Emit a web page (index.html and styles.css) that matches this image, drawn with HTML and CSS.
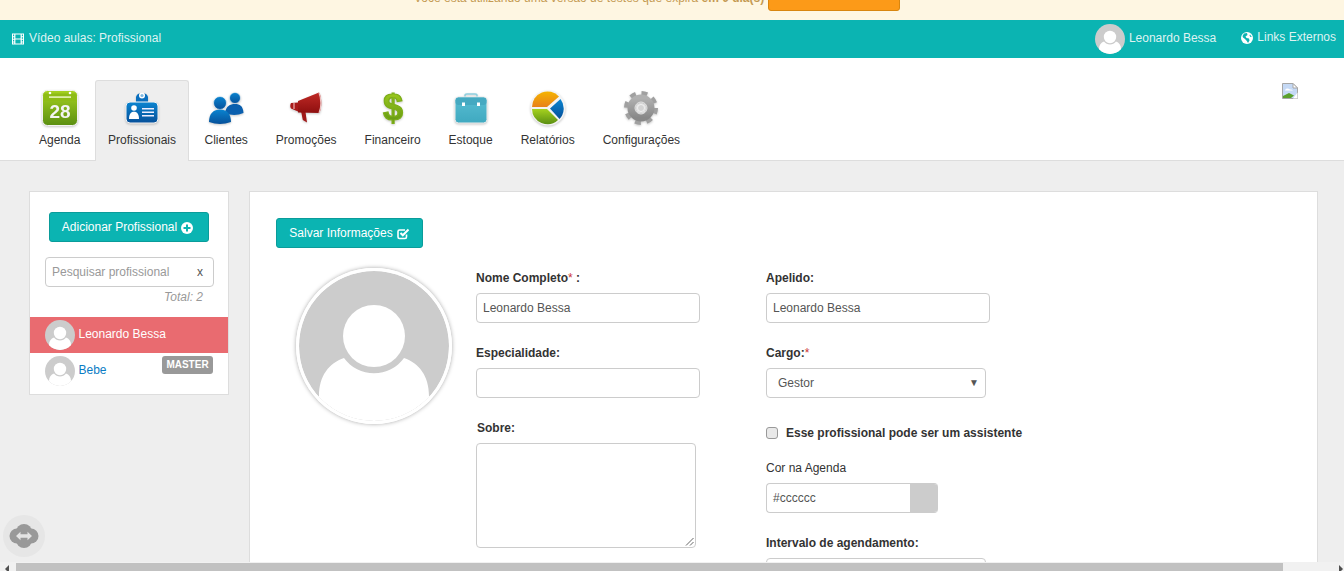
FILE: index.html
```html
<!DOCTYPE html>
<html lang="pt-BR">
<head>
<meta charset="utf-8">
<title>Profissional</title>
<link rel="stylesheet" href="styles.css">
</head>
<body>
<svg class="sprite" aria-hidden="true">
  <defs>
    <clipPath id="avclip"><circle cx="75" cy="75" r="75"/></clipPath>
    <linearGradient id="gGreen" x1="0" y1="0" x2="0" y2="1"><stop offset="0" stop-color="#a6d21f"/><stop offset="1" stop-color="#5b8f12"/></linearGradient>
    <linearGradient id="gBlue" x1="0" y1="0" x2="0" y2="1"><stop offset="0" stop-color="#0a84d0"/><stop offset="1" stop-color="#06509a"/></linearGradient>
    <linearGradient id="gRed" x1="0" y1="0" x2="0" y2="1"><stop offset="0" stop-color="#c02a26"/><stop offset="1" stop-color="#8e0f0f"/></linearGradient>
    <linearGradient id="gTeal" x1="0" y1="0" x2="0" y2="1"><stop offset="0" stop-color="#58bdd2"/><stop offset="1" stop-color="#3fa9c0"/></linearGradient>
    <linearGradient id="gOrange" x1="0" y1="0" x2="0" y2="1"><stop offset="0" stop-color="#f5b400"/><stop offset="1" stop-color="#e8801a"/></linearGradient>
    <linearGradient id="gGray" x1="0" y1="0" x2="0" y2="1"><stop offset="0" stop-color="#b0b0b0"/><stop offset="1" stop-color="#888"/></linearGradient>
    <symbol id="avatar" viewBox="0 0 150 150">
      <g clip-path="url(#avclip)">
        <rect width="150" height="150" fill="#ccc"/>
        <circle cx="75" cy="65" r="31" fill="#fff"/>
        <path d="M20 125C20 105 30 92 45 87A37 37 0 0 0 105 87C120 92 130 105 130 125V150H20Z" fill="#fff"/>
      </g>
    </symbol>
  </defs>
</svg>

<div class="banner">
  <span class="banner-text">Você está utilizando uma versão de testes que expira <b>em 0 dia(s)</b></span>
  <span class="banner-btn"></span>
</div>

<header class="topbar">
  <div class="topbar-left">
    <svg class="fa" width="12" height="12" viewBox="0 0 12 12"><path fill-rule="evenodd" fill="#fff" d="M0 .5H12V11.500H0ZM1 1.500V3.200H2.200V1.500ZM1 4.200V5.800H2.200V4.200ZM1 6.800V8.400H2.200V6.800ZM1 9.400V10.500H2.200V9.400ZM9.800 1.500V3.200H11V1.500ZM9.800 4.200V5.800H11V4.200ZM9.800 6.800V8.400H11V6.800ZM9.800 9.400V10.500H11V9.400ZM3.400 1.500V5.400H8.600V1.500ZM3.400 6.600V10.500H8.600V6.600Z"/></svg>
    <span>Vídeo aulas: Profissional</span>
  </div>
  <div class="topbar-right">
    <svg class="av30"><use href="#avatar"/></svg>
    <span class="topbar-name">Leonardo Bessa</span>
    <svg class="fa globe" width="12" height="12" viewBox="0 0 12 12"><circle cx="6" cy="6" r="6" fill="#fff"/><path fill="#0bb4b2" d="M3 1.500 6 1 6.500 3 4.500 4.500 5.500 6 8 6.500 8.500 8.500 7 11 5.800 9 4 7 2 5.500 1.500 4ZM9 2.500 10.800 5 9.500 5 8.500 3.500Z"/></svg>
    <span class="topbar-links">Links Externos</span>
  </div>
</header>

<nav class="nav">
  <a class="tab">
    <svg class="ico" viewBox="0 0 36 36"><rect x="0.500" y="0.500" width="35" height="35" rx="5" fill="url(#gGreen)" stroke="#f2f2f2"/><rect x="1.500" y="3.500" width="33" height="7.500" fill="#8ebc16"/><circle cx="8" cy="3" r="1.300" fill="#fff"/><circle cx="28" cy="3" r="1.300" fill="#fff"/><rect x="7" y="6.300" width="22" height="1.600" fill="#e6f2b8"/><text class="cal" x="18" y="27.500" text-anchor="middle">28</text></svg>
    <span>Agenda</span>
  </a>
  <a class="tab active">
    <svg class="ico" viewBox="0 0 36 36"><path d="M12 13V7A5 5 0 0 1 15 3.500H21A5 5 0 0 1 24 7V13Z" fill="#0a6fbe"/><circle cx="18" cy="5.500" r="3" fill="#fff"/><circle cx="18" cy="5.500" r="1.600" fill="#7db7e0"/><rect x="2" y="12" width="32" height="21" rx="4" fill="url(#gBlue)" stroke="#f5f5f5"/><circle cx="10" cy="18" r="2.800" fill="#fff"/><path d="M5 29C5 23.500 7.500 21.800 10 21.800S15 23.500 15 29Z" fill="#fff"/><path d="M18 18H30V19.500H18ZM18 21.500H30V23H18ZM18 25H30V26.500H18Z" fill="#eef"/></svg>
    <span>Profissionais</span>
  </a>
  <a class="tab">
    <svg class="ico" viewBox="0 0 36 36"><circle cx="27" cy="8" r="5.500" fill="url(#gBlue)" stroke="#fff" stroke-width=".6"/><path d="M17 23C18 16 22 14 27 14S35 16 35.500 23Q26 27 17 23Z" fill="#0a5fae"/><circle cx="12" cy="13" r="6.500" fill="url(#gBlue)" stroke="#fff" stroke-width=".6"/><path d="M1 32C1 23 6 19.500 12 19.500S23 23 23 32Q12 36 1 32Z" fill="url(#gBlue)"/></svg>
    <span>Clientes</span>
  </a>
  <a class="tab">
    <svg class="ico" viewBox="0 0 36 36"><path d="M13 21 17.500 22 19 32.500 14.800 30Z" fill="#a01818"/><path d="M3 13 10 12.500V21.500L3 18.500Q1.500 15.500 3 13Z" fill="#a81a1a"/><path d="M10 11 31 2.500C34 7 34 19 31 23L10 22.500Z" fill="url(#gRed)"/><path d="M31 3C33.500 8 33.500 18 31 23" fill="none" stroke="#f0c0c0" stroke-width="1.200"/><path d="M6 13V19" stroke="#e9b0b0" stroke-width="1.200"/></svg>
    <span>Promoções</span>
  </a>
  <a class="tab">
    <svg class="ico" viewBox="0 0 36 36"><text class="dollar" x="18" y="30" text-anchor="middle">$</text></svg>
    <span>Financeiro</span>
  </a>
  <a class="tab">
    <svg class="ico" viewBox="0 0 36 36"><path d="M12 8V5.500Q12 4 14 4H22Q24 4 24 5.500V8" fill="none" stroke="#8fd0df" stroke-width="1.500"/><rect x="2" y="7" width="32" height="26" rx="3.500" fill="url(#gTeal)" stroke="#ececec"/><rect x="2.500" y="7.500" width="31" height="7.500" rx="3" fill="#45a9c1"/><rect x="9" y="12.500" width="3" height="3.500" fill="#fff"/><rect x="24" y="12.500" width="3" height="3.500" fill="#fff"/></svg>
    <span>Estoque</span>
  </a>
  <a class="tab">
    <svg class="ico" viewBox="0 0 36 36"><circle cx="18" cy="18" r="17.500" fill="#f4f4f4"/><path d="M17 17H2A15.500 15.500 0 0 1 29 6.500Z" fill="url(#gOrange)"/><path d="M2 19H17L28 30A15.500 15.500 0 0 1 2 19Z" fill="url(#gGreen)"/><path d="M30.500 9A15.500 15.500 0 0 1 29.500 29L20 18.500Z" fill="url(#gBlue)"/></svg>
    <span>Relatórios</span>
  </a>
  <a class="tab">
    <svg class="ico" viewBox="0 0 36 36"><circle cx="18" cy="18" r="14.500" fill="none" stroke="#a0a0a0" stroke-width="5" stroke-dasharray="5.700 5.700"/><circle cx="18" cy="18" r="9.500" fill="none" stroke="url(#gGray)" stroke-width="8"/><circle cx="18" cy="18" r="6" fill="none" stroke="#e4e4e4" stroke-width="1"/><circle cx="18" cy="18" r="3.500" fill="#d4d4d4" stroke="#f0f0f0"/></svg>
    <span>Configurações</span>
  </a>
  <svg class="broken" width="16" height="16" viewBox="0 0 16 16"><path d="M.5.500H11L15.500 5V15.500H.5Z" fill="#c5d9f5" stroke="#a6a6a6"/><path d="M11 .5V5H15.500Z" fill="#fff" stroke="#a6a6a6"/><path d="M3 7Q5 4.500 8 6.500 10 6 11 7.500H3Z" fill="#fff"/><path d="M1 15V13L7 10 12 12.500 9 15Z" fill="#5aa02c"/><path d="M15.500 9.500 11 15.500H15.500Z" fill="#fff"/></svg>
</nav>

<main class="content">
  <aside class="side">
    <button class="btn btn-add">Adicionar Profissional
      <svg class="fa plus" width="12" height="12" viewBox="0 0 12 12"><circle cx="6" cy="6" r="6" fill="#fff"/><path d="M5 2.500H7V5H9.500V7H7V9.500H5V7H2.500V5H5Z" fill="#0bb4b2"/></svg>
    </button>
    <div class="search">
      <span class="search-ph">Pesquisar profissional</span>
      <span class="search-x">x</span>
    </div>
    <div class="total">Total: 2</div>
    <ul class="people">
      <li class="person selected"><svg class="av30"><use href="#avatar"/></svg><span>Leonardo Bessa</span></li>
      <li class="person"><svg class="av30"><use href="#avatar"/></svg><span class="person-link">Bebe</span><em class="badge">MASTER</em></li>
    </ul>
  </aside>

  <section class="panel">
    <button class="btn btn-save">Salvar Informações
      <svg class="fa plus" width="13" height="12" viewBox="0 0 13 12"><path d="M9.500 6.500V9Q9.500 10.500 8 10.500H2.500Q1 10.500 1 9V3.500Q1 2 2.500 2H8" fill="none" stroke="#fff" stroke-width="1.600"/><path d="M3.500 5 5.800 7.300 11.500 1.500" fill="none" stroke="#fff" stroke-width="2"/></svg>
    </button>
    <div class="form">
      <div class="photo"><svg class="photo-img"><use href="#avatar"/></svg></div>
      <div class="col col-a">
        <div class="field">
          <label class="lbl">Nome Completo<i>*</i> :</label>
          <div class="input">Leonardo Bessa</div>
        </div>
        <div class="field">
          <label class="lbl">Especialidade:</label>
          <div class="input"></div>
        </div>
        <div class="field">
          <label class="lbl lbl-sobre">Sobre:</label>
          <div class="textarea">
            <svg class="grip" width="9" height="9" viewBox="0 0 9 9"><path d="M8.500 1 1 8.500M8.500 5 5 8.500" stroke="#666" fill="none"/></svg>
          </div>
        </div>
      </div>
      <div class="col">
        <div class="field">
          <label class="lbl">Apelido:</label>
          <div class="input">Leonardo Bessa</div>
        </div>
        <div class="field">
          <label class="lbl">Cargo:<i>*</i></label>
          <div class="input select">Gestor<span class="arrow">▼</span></div>
        </div>
        <div class="check"><span class="box"></span><b>Esse profissional pode ser um assistente</b></div>
        <div class="field field-color">
          <label class="lbl lbl-plain">Cor na Agenda</label>
          <div class="color"><span class="color-val">#cccccc</span><span class="swatch"></span></div>
        </div>
        <div class="field">
          <label class="lbl">Intervalo de agendamento:</label>
          <div class="input select"></div>
        </div>
      </div>
    </div>
  </section>
</main>

<div class="cloud">
  <svg width="30" height="24" viewBox="0 0 30 24"><g fill="#999"><circle cx="8" cy="12" r="7.500"/><circle cx="22" cy="12" r="7.500"/><circle cx="15" cy="8" r="8"/><circle cx="15" cy="16" r="8"/></g><path d="M7 12 11.500 7.800V10.300H18.500V7.800L23 12 18.500 16.200V13.700H11.500V16.200Z" fill="#e4e4e4"/></svg>
</div>

<div class="hscroll">
  <span class="sc-arrow sc-left"></span>
  <span class="sc-thumb"></span>
  <span class="sc-arrow sc-right"></span>
</div>
</body>
</html>
```
FILE: styles.css
```css
* { box-sizing: border-box; }
html, body { margin: 0; height: 571px; overflow: hidden; }
body {
  font: 12px/16px "Liberation Sans", Arial, sans-serif;
  color: #333;
  background: #eee;
  position: relative;
}
.sprite { display: block; width: 0; height: 0; }
.fa { display: block; flex: none; }
.av30 { display: block; flex: none; width: 30px; height: 30px; }

/* trial banner, scrolled partly off the top */
.banner {
  height: 20px;
  background: #fef6e2;
  display: flex;
  gap: 4px;
  padding-left: 414px;
  overflow: hidden;
}
.banner-text {
  flex: none;
  width: 350px;
  line-height: 16px;
  margin-top: -10px;
  color: #c49a52;
  white-space: nowrap;
}
.banner-btn {
  flex: none;
  width: 132px;
  height: 30px;
  margin-top: -19px;
  background: #fc9a18;
  border: 1px solid #d8860f;
  border-radius: 3px;
}

/* top bar */
.topbar {
  height: 38px;
  background: #0bb4b2;
  color: #dff3f2;
  display: flex;
  justify-content: space-between;
  align-items: center;
  padding: 0 8px 0 12px;
}
.topbar-left, .topbar-right { display: flex; align-items: center; }
.topbar-left { gap: 5px; margin-top: -1px; }
.topbar-left span { margin-top: -1px; }
.topbar-name { margin: -2px 0 0 4px; }
.globe { margin: -2px 0 0 25px; }
.topbar-links { margin-left: 4px; margin-top: -4px; }

/* icon tabs */
.nav {
  height: 103px;
  background: #fff;
  border-bottom: 1px solid #ddd;
  display: flex;
  padding: 22px 46px 0 25px;
}
.tab {
  height: 81px;
  padding: 10px 14px 0;
  display: flex;
  flex-direction: column;
  align-items: center;
  border-top: 1px solid transparent;
  border-radius: 3px 3px 0 0;
}
.tab.active {
  background: #eee;
  border: 1px solid #ddd;
  border-bottom: 0;
  padding: 9px 12px 0;
  margin: 0 1.500px 0 .6px;
}
.tab span { margin-top: 6px; line-height: 16px; white-space: nowrap; }
.ico {
  display: block;
  width: 36px;
  height: 36px;
  margin-top: -1px;
  overflow: visible;
  filter: drop-shadow(0 1px 1px rgba(0, 0, 0, .22));
}
.tab.active .ico { margin-top: 0; }
.cal { font: bold 19px "Liberation Sans", Arial, sans-serif; fill: #f4f4f4; }
.dollar {
  font: bold 36px "Liberation Sans", Arial, sans-serif;
  fill: url(#gGreen);
  stroke: #7cae17;
  stroke-width: 1.2px;
}
.broken { margin-left: auto; margin-top: 3px; flex: none; }

/* page */
.content {
  display: flex;
  align-items: flex-start;
  gap: 20px;
  padding: 30px 26px 0 29px;
}
.side {
  flex: none;
  width: 200px;
  height: 204px;
  background: #fff;
  border: 1px solid #ddd;
  padding-top: 20px;
}
.btn {
  display: flex;
  align-items: center;
  justify-content: center;
  gap: 4px;
  height: 30px;
  padding: 0;
  font: 12px/16px "Liberation Sans", Arial, sans-serif;
  color: #fff;
  background: #0bb4b2;
  border: 1px solid #0a9c9a;
  border-radius: 3px;
}
.plus { margin-top: 2px; }
.btn-add { width: 160px; margin-left: 19px; padding-right: 3px; }
.search {
  width: 169px;
  height: 30px;
  margin: 15px 0 0 15px;
  padding: 0 10px 0 6px;
  display: flex;
  align-items: center;
  justify-content: space-between;
  border: 1px solid #ccc;
  border-radius: 4px;
}
.search-ph { color: #999; }
.search-x { color: #555; }
.total {
  margin: 2px 25px 0 0;
  text-align: right;
  font-style: italic;
  color: #999;
}
.people { list-style: none; margin: 12px 0 0; padding: 0; }
.person {
  height: 36px;
  display: flex;
  align-items: center;
  gap: 3.500px;
  padding: 0 15px;
}
.person span { margin-top: -2px; }
.person.selected { background: #e96b70; color: #fff; }
.person-link { color: #0a7cc4; }
.badge {
  align-self: flex-start;
  margin: 3px 0 0 auto;
  width: 51px;
  height: 18px;
  text-align: center;
  font: bold 10px/18px "Liberation Sans", Arial, sans-serif;
  color: #fff;
  background: #999;
  border-radius: 3px;
}
.panel {
  flex: 1;
  height: 500px;
  background: #fff;
  border: 1px solid #ddd;
  padding: 26px;
}
.btn-save { width: 147px; }
.form { display: flex; margin-top: 21px; }
.photo { flex: none; width: 200px; padding-left: 20px; margin-top: -1px; }
.photo-img {
  display: block;
  width: 156px;
  height: 156px;
  border: 3px solid #fff;
  border-radius: 50%;
  box-shadow: 0 0 4px rgba(0, 0, 0, .35);
}
.col { flex: none; width: 290px; }
.field { margin-bottom: 21px; }
.lbl { display: block; font-weight: bold; padding-top: 1px; margin-bottom: 7px; }
.lbl i { font-style: normal; font-weight: normal; color: #c33; }
.lbl-sobre { padding-left: 1px; }
.lbl-plain { font-weight: normal; }
.input {
  width: 224px;
  height: 30px;
  padding: 0 6px;
  display: flex;
  align-items: center;
  color: #555;
  border: 1px solid #ccc;
  border-radius: 4px;
  background: #fff;
}
.select {
  width: 220px;
  padding: 0 6px 0 11px;
  justify-content: space-between;
}
.arrow { font-size: 10px; color: #555; }
.textarea {
  position: relative;
  width: 220px;
  height: 105px;
  border: 1px solid #ccc;
  border-radius: 4px;
}
.grip { position: absolute; right: 1px; bottom: 1px; }
.check {
  display: flex;
  align-items: center;
  height: 20px;
  margin-top: 25px;
  gap: 8px;
}
.box {
  flex: none;
  width: 12px;
  height: 12px;
  background: #e9e9e9;
  border: 1px solid #999;
  border-radius: 3px;
}
.field-color { margin-top: 16px; }
.color {
  width: 172px;
  height: 30px;
  display: flex;
  overflow: hidden;
  border: 1px solid #ccc;
  border-right: 0;
  border-radius: 4px;
}
.color-val { flex: 1; padding-left: 6px; line-height: 28px; color: #555; }
.swatch { flex: none; width: 28px; background: #ccc; }

/* overlays */
.cloud {
  position: absolute;
  left: 3px;
  top: 515px;
  width: 42px;
  height: 42px;
  display: flex;
  align-items: center;
  justify-content: center;
  border-radius: 50%;
  background: #e6e6e6;
}
.hscroll {
  position: absolute;
  left: 0;
  right: 0;
  bottom: 0;
  height: 9px;
  background: #f1f1f1;
}
.sc-thumb { position: absolute; left: 16px; top: 1px; width: 1267px; height: 8px; background: #c1c1c1; }
.sc-arrow { position: absolute; top: 3px; width: 0; height: 0; border-style: solid; }
.sc-left { left: 5px; border-width: 4px 4px 4px 0; border-color: transparent #505050 transparent transparent; }
.sc-right { right: 1px; border-width: 4px 0 4px 4px; border-color: transparent transparent transparent #505050; }
```
